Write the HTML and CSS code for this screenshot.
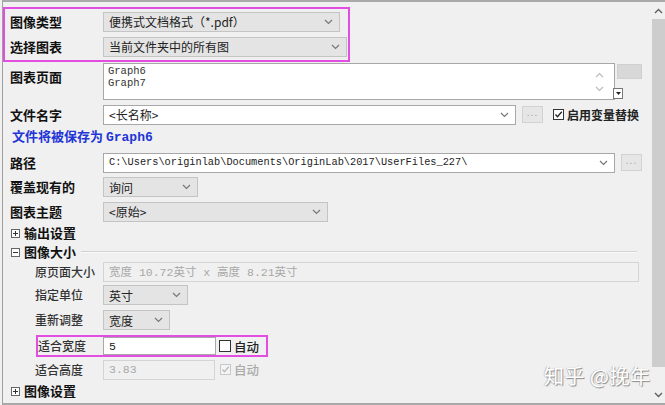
FILE: index.html
```html
<!DOCTYPE html>
<html lang="zh">
<head>
    <meta charset="UTF-8">
    <title>导出图表</title>
    <link rel="stylesheet" href="styles.css">
</head>
<body>
    <div class="dialog">
        <div class="panel">
            <div class="hl-box top-box">
                <div class="row">
                    <span class="label">图像类型</span>
                    <div class="select gray w-237"><span class="val">便携式文档格式（*.pdf）</span><svg class="chev" width="9" height="6" viewBox="0 0 9 6"><path d="M1 1l3.5 3.5L8 1" fill="none" stroke="#777" stroke-width="1.2"/></svg></div>
                </div>
                <div class="row">
                    <span class="label">选择图表</span>
                    <div class="select gray w-244"><span class="val">当前文件夹中的所有图</span><svg class="chev" width="9" height="6" viewBox="0 0 9 6"><path d="M1 1l3.5 3.5L8 1" fill="none" stroke="#777" stroke-width="1.2"/></svg></div>
                </div>
            </div>

            <div class="row row-pages">
                <span class="label">图表页面</span>
                <div class="pages">
                    <div class="pages-text">Graph6<br>Graph7</div>
                    <div class="pages-scroll">
                        <svg width="9" height="6" viewBox="0 0 9 6"><path d="M1 5l3.5-3.5L8 5" fill="none" stroke="#bbb" stroke-width="1.2"/></svg>
                        <svg width="9" height="6" viewBox="0 0 9 6"><path d="M1 1l3.5 3.5L8 1" fill="none" stroke="#bbb" stroke-width="1.2"/></svg>
                    </div>
                    <div class="mini-drop"><svg width="5" height="3" viewBox="0 0 5 3"><path d="M0 0h5L2.5 3z" fill="#222"/></svg></div>
                </div>
                <div class="btn-gray"></div>
            </div>

            <div class="row">
                <span class="label">文件名字</span>
                <div class="select white w-413"><span class="val">&lt;长名称&gt;</span><svg class="chev" width="9" height="6" viewBox="0 0 9 6"><path d="M1 1l3.5 3.5L8 1" fill="none" stroke="#777" stroke-width="1.2"/></svg></div>
                <div class="btn-dots">...</div>
                <span class="check on"><svg width="9" height="9" viewBox="0 0 9 9"><path d="M1.5 4.5l2 2.2L7.8 1.8" fill="none" stroke="#222" stroke-width="1.3"/></svg></span>
                <span class="check-label">启用变量替换</span>
            </div>

            <div class="row row-note">
                <span class="note">文件将被保存为 <span class="note-mono">Graph6</span></span>
            </div>

            <div class="row">
                <span class="label">路径</span>
                <div class="select white w-512"><span class="val mono">C:\Users\originlab\Documents\OriginLab\2017\UserFiles_227\</span><svg class="chev" width="9" height="6" viewBox="0 0 9 6"><path d="M1 1l3.5 3.5L8 1" fill="none" stroke="#777" stroke-width="1.2"/></svg></div>
                <div class="btn-dots">...</div>
            </div>

            <div class="row row-24">
                <span class="label">覆盖现有的</span>
                <div class="select gray w-95"><span class="val">询问</span><svg class="chev" width="9" height="6" viewBox="0 0 9 6"><path d="M1 1l3.5 3.5L8 1" fill="none" stroke="#777" stroke-width="1.2"/></svg></div>
            </div>

            <div class="row">
                <span class="label">图表主题</span>
                <div class="select gray w-225"><span class="val">&lt;原始&gt;</span><svg class="chev" width="9" height="6" viewBox="0 0 9 6"><path d="M1 1l3.5 3.5L8 1" fill="none" stroke="#777" stroke-width="1.2"/></svg></div>
            </div>

            <div class="row section row-18">
                <svg class="toggle" width="9" height="9" viewBox="0 0 9 9"><rect x="0.5" y="0.5" width="8" height="8" fill="#fff" stroke="#666"/><path d="M2 4.5h5M4.5 2v5" stroke="#333"/></svg>
                <span class="section-title">输出设置</span>
            </div>

            <div class="row section row-20">
                <svg class="toggle" width="9" height="9" viewBox="0 0 9 9"><rect x="0.5" y="0.5" width="8" height="8" fill="#fff" stroke="#666"/><path d="M2 4.5h5" stroke="#333"/></svg>
                <span class="section-title">图像大小</span>
                <span class="section-line"></span>
            </div>

            <div class="row sub row-20">
                <span class="label sub-label">原页面大小</span>
                <div class="field disabled w-536"><span class="val mono">宽度 10.72英寸 x 高度 8.21英寸</span></div>
            </div>

            <div class="row sub row-26">
                <span class="label sub-label">指定单位</span>
                <div class="select gray w-85"><span class="val">英寸</span><svg class="chev" width="9" height="6" viewBox="0 0 9 6"><path d="M1 1l3.5 3.5L8 1" fill="none" stroke="#777" stroke-width="1.2"/></svg></div>
            </div>

            <div class="row sub row-24">
                <span class="label sub-label">重新调整</span>
                <div class="select gray w-67"><span class="val">宽度</span><svg class="chev" width="9" height="6" viewBox="0 0 9 6"><path d="M1 1l3.5 3.5L8 1" fill="none" stroke="#777" stroke-width="1.2"/></svg></div>
            </div>

            <div class="hl-box fit-box">
                <div class="row">
                    <span class="label sub-label fit-label">适合宽度</span>
                    <div class="field white w-113"><span class="val mono">5</span></div>
                    <span class="check"></span>
                    <span class="check-label plain">自动</span>
                </div>
            </div>

            <div class="row sub">
                <span class="label sub-label">适合高度</span>
                <div class="field disabled w-112"><span class="val mono">3.83</span></div>
                <span class="check off"><svg width="9" height="9" viewBox="0 0 9 9"><path d="M1.5 4.5l2 2.2L7.8 1.8" fill="none" stroke="#bbb" stroke-width="1.3"/></svg></span>
                <span class="check-label plain grey">自动</span>
            </div>

            <div class="row section row-18">
                <svg class="toggle" width="9" height="9" viewBox="0 0 9 9"><rect x="0.5" y="0.5" width="8" height="8" fill="#fff" stroke="#666"/><path d="M2 4.5h5M4.5 2v5" stroke="#333"/></svg>
                <span class="section-title">图像设置</span>
            </div>
        </div>

        <div class="scrollbar">
            <svg class="sb-arrow" width="9" height="6" viewBox="0 0 9 6"><path d="M1 5l3.5-3.5L8 5" fill="none" stroke="#606060" stroke-width="1.4"/></svg>
            <div class="sb-thumb"></div>
            <div class="sb-rest"></div>
            <svg class="sb-arrow" width="9" height="6" viewBox="0 0 9 6"><path d="M1 1l3.5 3.5L8 1" fill="none" stroke="#606060" stroke-width="1.4"/></svg>
        </div>

        <div class="watermark">知乎 @挽年</div>
    </div>
</body>
</html>
```

FILE: styles.css
```css
body { margin: 0; background: #f0f0f0; font-family: "Noto Sans CJK SC", "Liberation Sans", sans-serif; color: #111; }
.dialog { position: relative; display: flex; box-sizing: border-box; width: 663px; height: 405px; margin-left: 2px; border-top: 2px solid #a9a9a9; border-bottom: 2px solid #a9a9a9; border-left: 1px solid #a0a0a0; background: #f0f0f0; }
.panel { flex: 1; padding-top: 5px; }

.row { display: flex; align-items: center; height: 25px; padding-left: 7px; }
.row.sub { padding-left: 32px; }
.row-18 { height: 18px; }
.row-20 { height: 20px; }
.row-24 { height: 24px; }
.row-26 { height: 26px; }
.label { width: 93px; flex-shrink: 0; font-size: 13px; font-weight: 700; line-height: 18px; color: #111; }
.sub-label { width: 68px; font-size: 12px; font-weight: 500; color: #333; }

.hl-box { border: 2px solid #e24ee2; box-sizing: border-box; }
.top-box { width: 347px; padding-bottom: 1px; }
.top-box .row { padding-left: 5px; }
.fit-box { width: 232px; margin: 3px 0 0 33px; }
.fit-box .row { height: 18px; padding-left: 0; }
.fit-label { width: 65px; }

.select, .field { display: flex; align-items: center; justify-content: space-between; box-sizing: border-box; height: 20px; padding: 0 6px 0 5px; font-size: 12px; line-height: 17px; color: #222; }
.select.gray { background: #e4e4e4; border: 1px solid #c4c4c4; }
.select.white, .field.white { background: #fff; border: 1px solid #a8a8a8; }
.field.disabled { background: #f0f0f0; border: 1px solid #d4d4d4; color: #a8a8a8; }
.fit-box .field { height: 18px; }
.val { white-space: nowrap; }
.mono { font-family: "Liberation Mono", "Noto Sans CJK SC", monospace; font-size: 10.3px; }
.field .mono { font-size: 11.5px; }
.chev { flex-shrink: 0; }

.w-67 { width: 67px; } .w-85 { width: 85px; } .w-95 { width: 95px; } .w-112 { width: 112px; } .w-113 { width: 113px; }
.w-225 { width: 225px; } .w-237 { width: 237px; } .w-244 { width: 244px; } .w-413 { width: 413px; } .w-512 { width: 512px; } .w-536 { width: 536px; }

.row-pages { align-items: flex-start; height: 40px; padding-top: 1px; box-sizing: border-box; }
.row-pages .label { padding-top: 5px; }
.pages { position: relative; display: flex; box-sizing: border-box; width: 512px; height: 37px; background: #fff; border: 1px solid #a8a8a8; }
.pages-text { flex: 1; padding: 1px 4px; font-family: "Liberation Mono", monospace; font-size: 10.5px; line-height: 12px; color: #333; }
.pages-scroll { display: flex; flex-direction: column; justify-content: center; gap: 8px; width: 18px; padding-right: 6px; align-items: center; }
.mini-drop { position: absolute; right: -9px; bottom: 0; display: flex; align-items: center; justify-content: center; box-sizing: border-box; width: 10px; height: 11px; background: #fff; border: 1px solid #777; }
.btn-gray { width: 25px; height: 15px; margin: 1px 0 0 2px; background: #d8d8d8; border: 1px solid #d0d0d0; box-sizing: border-box; }

.btn-dots { box-sizing: border-box; width: 21px; height: 17px; margin-left: 6px; background: #e6e6e6; border: 1px solid #d2d2d2; font-size: 10px; line-height: 10px; text-align: center; color: #aaa; letter-spacing: 1px; }
.check { display: flex; align-items: center; justify-content: center; box-sizing: border-box; width: 11px; height: 11px; margin-left: 10px; background: #fff; border: 1px solid #333; }
.fit-box .check { width: 12px; height: 12px; margin-left: 3px; }
.check.off { margin-left: 5px; border-color: #c8c8c8; background: #f4f4f4; }
.check-label { margin-left: 3px; font-size: 12px; font-weight: 700; line-height: 17px; color: #222; }
.check-label.plain { font-weight: 500; font-size: 12.5px; }
.check-label.grey { color: #aaa; }

.row-note { height: 23px; padding-left: 9px; align-items: flex-start; }
.note { font-size: 13px; font-weight: 700; line-height: 18px; color: #1f35d6; }
.note-mono { font-family: "Liberation Mono", monospace; font-size: 13px; }

.section { padding-left: 8px; }
.toggle { flex-shrink: 0; }
.section-title { margin-left: 4px; font-size: 13px; font-weight: 700; line-height: 18px; }
.section-line { flex: 1; height: 0; margin: 0 14px 0 5px; border-top: 1px solid #d2d2d2; border-bottom: 1px solid #fafafa; }

.scrollbar { display: flex; flex-direction: column; align-items: center; width: 14px; }
.sb-arrow { margin: 6px 0 5px; }
.sb-thumb { width: 13px; height: 348px; background: #cdcdcd; }
.sb-rest { flex: 1; }

.watermark { position: absolute; left: 541px; top: 361px; font-size: 20px; line-height: 26px; color: #fff; text-shadow: 1px 1px 1px #8a8a8a, -1px 0 1px #c0c0c0; letter-spacing: 0.5px; }
```
